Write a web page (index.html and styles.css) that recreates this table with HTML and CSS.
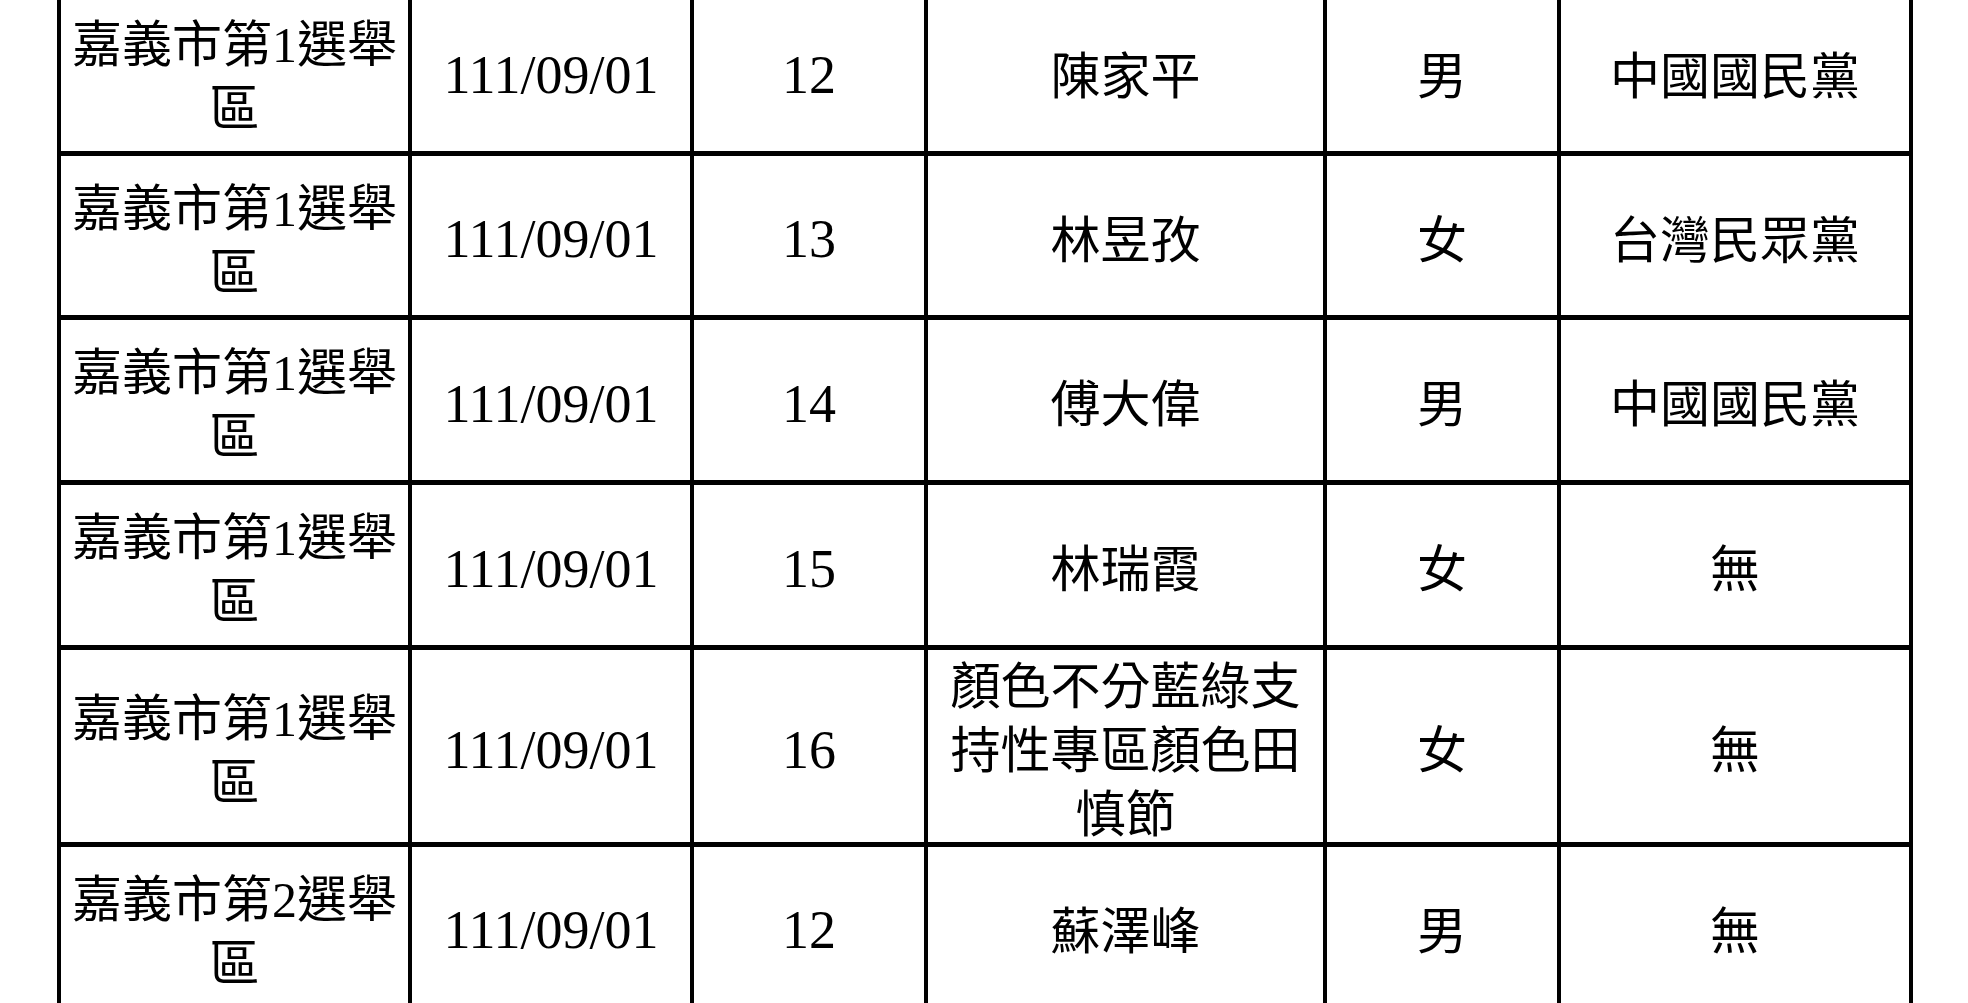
FILE: index.html
```html
<!DOCTYPE html>
<html lang="zh-Hant">
<head>
<meta charset="utf-8">
<title>候選人名單</title>
<link rel="stylesheet" href="styles.css">
</head>
<body>
<table class="roster">
  <colgroup>
    <col class="c-area"><col class="c-date"><col class="c-no"><col class="c-name"><col class="c-sex"><col class="c-party">
  </colgroup>
  <tbody>
    <tr><td>嘉義市第<span class="num">1</span>選舉區</td><td class="num">111/09/01</td><td class="num">12</td><td>陳家平</td><td>男</td><td>中國國民黨</td></tr>
    <tr><td>嘉義市第<span class="num">1</span>選舉區</td><td class="num">111/09/01</td><td class="num">13</td><td>林昱孜</td><td>女</td><td>台灣民眾黨</td></tr>
    <tr class="mid"><td>嘉義市第<span class="num">1</span>選舉區</td><td class="num">111/09/01</td><td class="num">14</td><td>傅大偉</td><td>男</td><td>中國國民黨</td></tr>
    <tr class="mid"><td>嘉義市第<span class="num">1</span>選舉區</td><td class="num">111/09/01</td><td class="num">15</td><td>林瑞霞</td><td>女</td><td>無</td></tr>
    <tr class="tall"><td>嘉義市第<span class="num">1</span>選舉區</td><td class="num">111/09/01</td><td class="num">16</td><td>顏色不分藍綠支持性專區顏色田慎節</td><td>女</td><td>無</td></tr>
    <tr><td>嘉義市第<span class="num">2</span>選舉區</td><td class="num">111/09/01</td><td class="num">12</td><td>蘇澤峰</td><td>男</td><td>無</td></tr>
  </tbody>
</table>
</body>
</html>
```
FILE: styles.css
```css
html, body {
  margin: 0;
  padding: 0;
  background: #fff;
}

body {
  height: 1003px;
  overflow: hidden;
}

.roster {
  border-collapse: collapse;
  table-layout: fixed;
  width: 1856px;
  margin: -13px 0 0 57px;
  font-family: "Noto Sans CJK TC", "Noto Sans CJK SC", sans-serif;
  font-size: 50px;
  line-height: 64px;
  color: #000;
}

.roster tr {
  height: 164px;
}

.roster tr.mid {
  height: 165px;
}

.roster tr.tall {
  height: 197px;
}

.roster td {
  border-style: solid;
  border-color: #000;
  border-width: 5px 4px;
  padding: 0;
  text-align: center;
  vertical-align: middle;
}

.c-area { width: 351px; }
.c-date { width: 282px; }
.c-no { width: 234px; }
.c-name { width: 399px; }
.c-sex { width: 234px; }
.c-party { width: 352px; }

.num {
  font-family: "Liberation Serif", "Times New Roman", serif;
}

td.num {
  font-size: 54px;
  padding-top: 7px;
}

span.num {
  line-height: 40px;
}
```
